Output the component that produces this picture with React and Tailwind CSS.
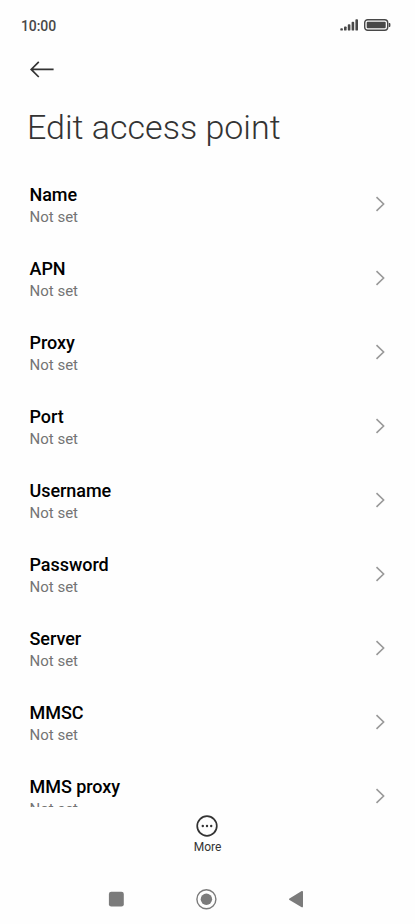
const FIELDS = [
  { label: "Name", value: "Not set" },
  { label: "APN", value: "Not set" },
  { label: "Proxy", value: "Not set" },
  { label: "Port", value: "Not set" },
  { label: "Username", value: "Not set" },
  { label: "Password", value: "Not set" },
  { label: "Server", value: "Not set" },
  { label: "MMSC", value: "Not set" },
  { label: "MMS proxy", value: "Not set" },
];

function StatusBar() {
  return (
    <div className="flex h-[50px] shrink-0 items-center justify-between pl-[21px] pr-6 text-[#484848]">
      <span className="pt-0.5 text-[14px] font-medium leading-5 tracking-[-0.1px]">10:00</span>
      <div className="flex items-center gap-[5px]">
        <svg width="19" height="12" viewBox="0 0 19 12" fill="currentColor">
          <rect x="0.3" y="9.2" width="2.6" height="2.4" rx="0.9" />
          <rect x="4" y="7.4" width="2.6" height="4.2" rx="0.9" />
          <rect x="7.8" y="5.2" width="2.6" height="6.4" rx="0.9" />
          <rect x="11.6" y="2.8" width="2.6" height="8.8" rx="0.9" />
          <rect x="15.4" y="0.2" width="2.6" height="11.4" rx="0.9" />
        </svg>
        <svg width="27" height="12" viewBox="0 0 27 12" fill="currentColor">
          <rect x="0.7" y="0.7" width="23" height="10.6" rx="3" fill="none" stroke="currentColor" strokeWidth="1.4" />
          <rect x="2.7" y="2.7" width="19" height="6.6" rx="1" />
          <path d="M24.8 4h.6c.6 0 1 .5 1 1v2c0 .5-.4 1-1 1h-.6z" />
        </svg>
      </div>
    </div>
  );
}

function FieldRow({ label, value }) {
  return (
    <li className="flex h-[74px] items-center justify-between pl-[29.5px] pr-[30px]">
      <div className="pt-0.5">
        <div className="text-[18px] font-medium leading-6 tracking-[-0.05px] text-black">{label}</div>
        <div className="text-[15px] leading-5 text-[#747474]">{value}</div>
      </div>
      <svg width="10" height="16" viewBox="0 0 10 16" fill="none" stroke="#999999" strokeWidth="1.6">
        <path d="M1.5 1.2 8.6 8l-7.1 6.8" />
      </svg>
    </li>
  );
}

function NavigationBar() {
  return (
    <nav className="flex h-[50px] shrink-0 items-center justify-center gap-[71px] pr-[3px] text-[#7b7b7b]">
      <svg width="16" height="16" viewBox="0 0 16 16" fill="currentColor">
        <rect x="0.9" y="0.7" width="14.9" height="14.9" rx="2.4" />
      </svg>
      <svg width="22" height="22" viewBox="0 0 22 22" fill="currentColor">
        <circle cx="11.4" cy="11.3" r="9.5" fill="none" stroke="currentColor" strokeWidth="1.4" />
        <circle cx="11.4" cy="11.3" r="5.7" />
      </svg>
      <svg width="16" height="18" viewBox="0 0 16 18" fill="currentColor">
        <path d="M1.5 8.5 13.7 1.1c.6-.4 1.3 0 1.3.7v14.8c0 .7-.7 1.1-1.3.7L1.5 10.1c-.6-.4-.6-1.2 0-1.6z" />
      </svg>
    </nav>
  );
}

export default function App() {
  return (
    <div className="flex h-[924px] w-[415px] flex-col overflow-hidden bg-[#fefefe] font-['Roboto',sans-serif]">
      <StatusBar />
      <header className="h-[117px] shrink-0">
        <button className="ml-[29px] mt-2.5 block text-[#333333]" aria-label="Back">
          <svg width="26" height="18" viewBox="0 0 26 18" fill="none" stroke="currentColor" strokeWidth="1.7">
            <path d="M24.6 9.4H2.4M9.8 1.8 2.2 9.4l7.6 7.6" />
          </svg>
        </button>
        <h1 className="ml-[27px] mt-7 whitespace-nowrap text-[34px] font-light leading-[42px] text-[#333333]">
          Edit access point
        </h1>
      </header>
      <ul className="h-[640px] shrink-0 overflow-hidden">
        {FIELDS.map((field) => (
          <FieldRow key={field.label} {...field} />
        ))}
      </ul>
      <footer className="flex h-[67px] shrink-0 justify-center pt-2">
        <button className="flex flex-col items-center text-[#333333]">
          <svg width="22" height="22" viewBox="0 0 22 22" fill="currentColor">
            <circle cx="11" cy="11" r="9.8" fill="none" stroke="currentColor" strokeWidth="1.7" />
            <circle cx="6.8" cy="11" r="1.2" />
            <circle cx="11" cy="11" r="1.2" />
            <circle cx="15.2" cy="11" r="1.2" />
          </svg>
          <span className="mt-0.5 text-[12px] leading-4">More</span>
        </button>
      </footer>
      <NavigationBar />
    </div>
  );
}
